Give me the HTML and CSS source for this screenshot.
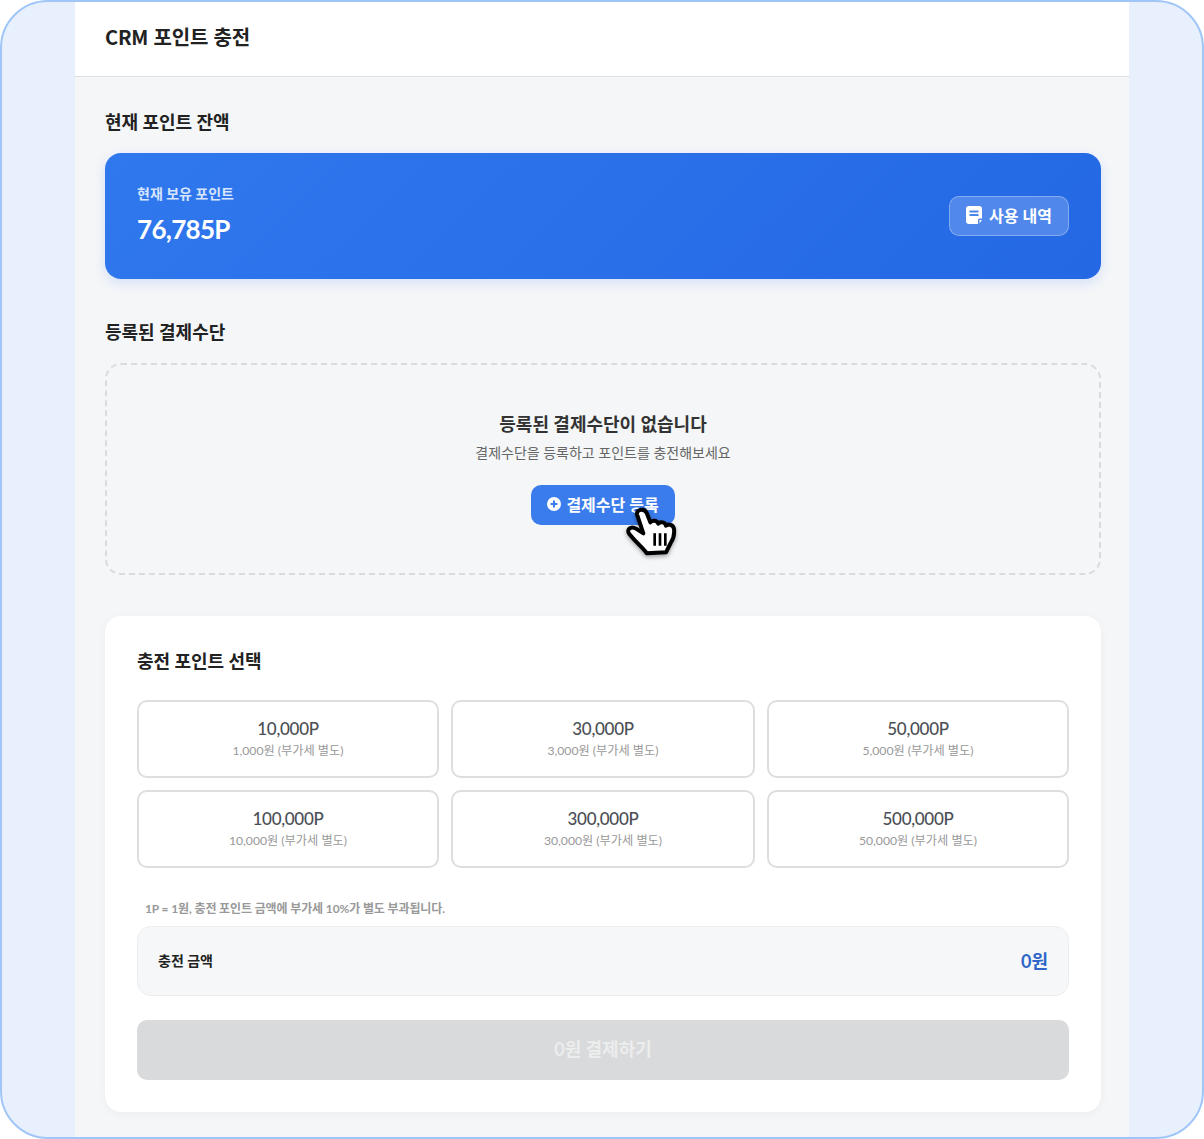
FILE: index.html
```html
<!DOCTYPE html>
<html lang="ko">
<head>
  <meta charset="UTF-8" />
  <meta name="viewport" content="width=device-width, initial-scale=1" />
  <title>CRM 포인트 충전</title>
  <link rel="stylesheet" href="styles.css">
</head>
<body>
  <div class="frame">
    <div class="app">
      <header class="top-bar">
        <h1 class="page-title">CRM 포인트 충전</h1>
      </header>

      <main class="content">
        <h2 class="section-title">현재 포인트 잔액</h2>
        <div class="balance-card">
          <div class="balance-info">
            <p class="balance-label">현재 보유 포인트</p>
            <p class="balance-value">76,785P</p>
          </div>
          <button class="history-btn">
            <svg class="history-icon" viewBox="0 0 16 18" width="16" height="18">
              <path fill="#fff" d="M3 0h10a3 3 0 0 1 3 3v9.5h-2.5a1.5 1.5 0 0 0-1.5 1.5v4H3a3 3 0 0 1-3-3V3a3 3 0 0 1 3-3z"/>
              <path fill="#fff" d="M13.5 14H16l-2.5 3.5z"/>
              <path stroke="#4a86ea" stroke-width="1.8" d="M3.5 5.5h9M3.5 9h9"/>
            </svg>
            <span>사용 내역</span>
          </button>
        </div>

        <h2 class="section-title section-gap">등록된 결제수단</h2>
        <div class="empty-box">
          <p class="empty-title">등록된 결제수단이 없습니다</p>
          <p class="empty-text">결제수단을 등록하고 포인트를 충전해보세요</p>
          <div class="add-wrap">
            <button class="add-btn">
              <svg viewBox="0 0 14 14" width="14" height="14">
                <circle cx="7" cy="7" r="7" fill="#fff"/>
                <path stroke="#3b7cec" stroke-width="2" d="M3.5 7h7M7 3.5v7"/>
              </svg>
              <span>결제수단 등록</span>
            </button>
            <svg class="hand-cursor" viewBox="0 0 210 210" width="70" height="70">
              <path fill="#fff" stroke="#000" stroke-width="12" stroke-linejoin="round" d="M66 58c-2-16 24-20 30-2l10 26c6-8 20-6 24 4 6-7 20-5 23 6 7-6 22-3 24 10 2 16-2 30-10 42l-14 28-58 3c-8-14-28-28-52-58-10-12 4-26 20-16l22 14z"/>
              <path stroke="#000" stroke-width="8" d="M119 115v37M135 115v37M151 115v37"/>
            </svg>
          </div>
        </div>

        <section class="charge-card">
          <h2 class="section-title charge-title">충전 포인트 선택</h2>
          <div class="point-grid">
            <button class="point-option"><span class="point-value">10,000P</span><span class="point-price">1,000원 (부가세 별도)</span></button>
            <button class="point-option"><span class="point-value">30,000P</span><span class="point-price">3,000원 (부가세 별도)</span></button>
            <button class="point-option"><span class="point-value">50,000P</span><span class="point-price">5,000원 (부가세 별도)</span></button>
            <button class="point-option"><span class="point-value">100,000P</span><span class="point-price">10,000원 (부가세 별도)</span></button>
            <button class="point-option"><span class="point-value">300,000P</span><span class="point-price">30,000원 (부가세 별도)</span></button>
            <button class="point-option"><span class="point-value">500,000P</span><span class="point-price">50,000원 (부가세 별도)</span></button>
          </div>
          <p class="note">1P = 1원, 충전 포인트 금액에 부가세 10%가 별도 부과됩니다.</p>
          <div class="summary">
            <span class="summary-label">충전 금액</span>
            <span class="summary-value">0원</span>
          </div>
          <button class="pay-btn" disabled>0원 결제하기</button>
        </section>
      </main>
    </div>
  </div>
</body>
</html>
```

FILE: styles.css
```css
* {
  box-sizing: border-box;
}

html, body {
  margin: 0;
  padding: 0;
  background: #fff;
}

body {
  font-family: Lato, "Noto Sans CJK KR", sans-serif;
  color: #222;
}

button {
  font-family: inherit;
}

.frame {
  width: 1204px;
  height: 1139px;
  background: #e8f0fe;
  border: 2px solid #a0c6f8;
  border-radius: 48px;
  overflow: hidden;
}

.app {
  width: 1054px;
  height: 100%;
  margin-left: 73px;
  background: #f4f6f8;
}

.top-bar {
  height: 75px;
  background: #fff;
  border-bottom: 1px solid #dcdfe3;
  padding: 0 30px 6px;
  display: flex;
  align-items: center;
}

.page-title {
  margin: 0;
  font-family: "Noto Sans CJK KR", sans-serif;
  font-size: 20px;
  font-weight: 700;
  letter-spacing: -0.2px;
  color: #222;
}

.content {
  padding: 30px 28px 0 30px;
}

.section-title {
  margin: 0;
  font-size: 18px;
  line-height: 30px;
  font-weight: 700;
  color: #222;
}

.section-gap {
  margin-top: 38px;
}

.balance-card {
  margin-top: 16px;
  height: 126px;
  padding: 0 32px;
  border-radius: 16px;
  background: linear-gradient(135deg, #3078ee, #2468e4);
  box-shadow: 0 4px 12px rgba(37, 99, 235, 0.15);
  display: flex;
  justify-content: space-between;
  align-items: center;
}

.balance-info {
  padding-bottom: 2px;
}

.balance-label {
  margin: 0;
  font-size: 14px;
  font-weight: 700;
  color: #d6e4fc;
}

.balance-value {
  margin: 8px 0 0;
  font-size: 26px;
  line-height: 36px;
  font-weight: 700;
  letter-spacing: -0.7px;
  color: #fff;
}

.history-btn {
  width: 120px;
  height: 40px;
  padding: 0 0 2px;
  display: flex;
  align-items: center;
  justify-content: center;
  gap: 7px;
  background: rgba(255, 255, 255, 0.2);
  border: 1px solid rgba(255, 255, 255, 0.3);
  border-radius: 10px;
  font-size: 16px;
  font-weight: 700;
  color: #fff;
}

.empty-box {
  margin-top: 16px;
  height: 212px;
  border: 2px dashed #d9dbde;
  border-radius: 16px;
  text-align: center;
  padding-top: 46px;
}

.empty-title {
  margin: 0;
  font-size: 18px;
  line-height: 26px;
  font-weight: 700;
  color: #333;
}

.empty-text {
  margin: 4px 0 0;
  font-size: 14px;
  line-height: 24px;
  color: #666;
}

.add-wrap {
  margin-top: 20px;
  display: inline-block;
  position: relative;
}

.add-btn {
  height: 40px;
  width: 144px;
  padding: 0 0 2px;
  display: flex;
  align-items: center;
  justify-content: center;
  gap: 5px;
  background: #3b7cec;
  border: none;
  border-radius: 10px;
  font-size: 16px;
  font-weight: 700;
  color: #fff;
}

.hand-cursor {
  position: absolute;
  left: 84px;
  top: 10px;
  filter: drop-shadow(0 2px 2px rgba(0, 0, 0, 0.35));
}

.charge-card {
  margin-top: 41px;
  height: 496px;
  background: #fff;
  border-radius: 16px;
  box-shadow: 0 2px 10px rgba(0, 0, 0, 0.04);
  padding: 30px 32px 0;
}

.point-grid {
  margin-top: 24px;
  display: grid;
  grid-template-columns: 302px 1fr 302px;
  gap: 12px;
}

.point-option {
  height: 78px;
  background: #fff;
  border: 2px solid #dcdee0;
  border-radius: 10px;
  display: flex;
  flex-direction: column;
  align-items: center;
  justify-content: center;
  padding: 0 0 1px;
}

.point-value {
  font-size: 17px;
  line-height: 24px;
  font-weight: 500;
  letter-spacing: -0.3px;
  color: #4b4f55;
}

.point-price {
  font-size: 12.2px;
  line-height: 20px;
  color: #999;
}

.note {
  margin: 31px 0 0 8px;
  font-size: 12px;
  line-height: 20px;
  font-weight: 700;
  letter-spacing: -0.12px;
  color: #999;
}

.summary {
  margin-top: 7px;
  height: 70px;
  background: #f5f7f9;
  border: 1px solid #ebedef;
  border-radius: 14px;
  padding: 0 20px 2px;
  display: flex;
  justify-content: space-between;
  align-items: center;
}

.summary-label {
  font-size: 14px;
  font-weight: 700;
  color: #222;
}

.summary-value {
  font-size: 18px;
  font-weight: 700;
  color: #2f66c8;
}

.pay-btn {
  margin-top: 24px;
  width: 100%;
  height: 60px;
  padding: 0 0 5px;
  background: #d9dadc;
  border: none;
  border-radius: 10px;
  font-size: 18px;
  font-weight: 700;
  color: #eceded;
}
```
